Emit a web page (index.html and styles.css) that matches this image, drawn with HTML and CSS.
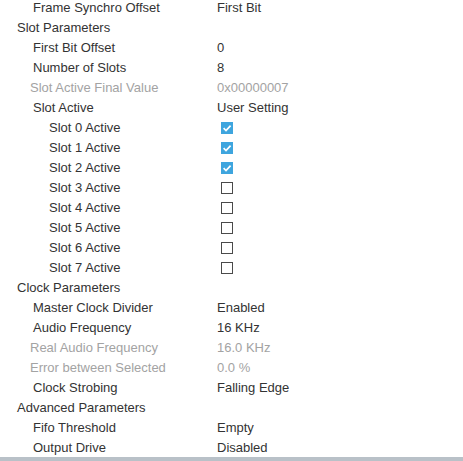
FILE: index.html
```html
<!DOCTYPE html>
<html>
<head>
<meta charset="utf-8">
<link rel="stylesheet" href="styles.css">
</head>
<body>
<div class="tree">
  <div class="row l1"><span class="label">Frame Synchro Offset</span><span class="value">First Bit</span></div>
  <div class="row l0"><span class="label">Slot Parameters</span><span class="value"></span></div>
  <div class="row l1"><span class="label">First Bit Offset</span><span class="value">0</span></div>
  <div class="row l1"><span class="label">Number of Slots</span><span class="value">8</span></div>
  <div class="row l1 dis"><span class="label">Slot Active Final Value</span><span class="value">0x00000007</span></div>
  <div class="row l1"><span class="label">Slot Active</span><span class="value">User Setting</span></div>
  <div class="row l2"><span class="label">Slot 0 Active</span><span class="value"><span class="cb on"><svg viewBox="0 0 12 12" width="12" height="12"><path d="M2.6 6.2 L5 8.5 L9.6 3.6" fill="none" stroke="#fff" stroke-width="1.7"/></svg></span></span></div>
  <div class="row l2"><span class="label">Slot 1 Active</span><span class="value"><span class="cb on"><svg viewBox="0 0 12 12" width="12" height="12"><path d="M2.6 6.2 L5 8.5 L9.6 3.6" fill="none" stroke="#fff" stroke-width="1.7"/></svg></span></span></div>
  <div class="row l2"><span class="label">Slot 2 Active</span><span class="value"><span class="cb on"><svg viewBox="0 0 12 12" width="12" height="12"><path d="M2.6 6.2 L5 8.5 L9.6 3.6" fill="none" stroke="#fff" stroke-width="1.7"/></svg></span></span></div>
  <div class="row l2"><span class="label">Slot 3 Active</span><span class="value"><span class="cb"></span></span></div>
  <div class="row l2"><span class="label">Slot 4 Active</span><span class="value"><span class="cb"></span></span></div>
  <div class="row l2"><span class="label">Slot 5 Active</span><span class="value"><span class="cb"></span></span></div>
  <div class="row l2"><span class="label">Slot 6 Active</span><span class="value"><span class="cb"></span></span></div>
  <div class="row l2"><span class="label">Slot 7 Active</span><span class="value"><span class="cb"></span></span></div>
  <div class="row l0"><span class="label">Clock Parameters</span><span class="value"></span></div>
  <div class="row l1"><span class="label">Master Clock Divider</span><span class="value">Enabled</span></div>
  <div class="row l1"><span class="label">Audio Frequency</span><span class="value">16 KHz</span></div>
  <div class="row l1 dis"><span class="label">Real Audio Frequency</span><span class="value">16.0 KHz</span></div>
  <div class="row l1 dis"><span class="label">Error between Selected</span><span class="value">0.0 %</span></div>
  <div class="row l1"><span class="label">Clock Strobing</span><span class="value">Falling Edge</span></div>
  <div class="row l0"><span class="label">Advanced Parameters</span><span class="value"></span></div>
  <div class="row l1"><span class="label">Fifo Threshold</span><span class="value">Empty</span></div>
  <div class="row l1"><span class="label">Output Drive</span><span class="value">Disabled</span></div>
</div>
<div class="bar"></div>
</body>
</html>
```
FILE: styles.css
```css
html, body {
  margin: 0;
  padding: 0;
  background: #fff;
  overflow: hidden;
}
body {
  width: 463px;
  height: 461px;
  font-family: "Liberation Sans", Arial, sans-serif;
  font-size: 13px;
  color: #333;
}
.tree {
  margin-top: -3px;
}
.row {
  display: grid;
  grid-template-columns: 217px 1fr;
  height: 20px;
  line-height: 21px;
  white-space: nowrap;
}
.label {
  overflow: hidden;
}
.l0 .label { padding-left: 17px; }
.l1 .label { padding-left: 33px; }
.l2 .label { padding-left: 49px; }
.dis .label { padding-left: 30px; }
.dis { color: #a3a3a3; }
.value {
  display: flex;
  align-items: center;
}
.cb {
  box-sizing: border-box;
  width: 12px;
  height: 12px;
  margin-left: 4px;
  margin-top: 1px;
  border: 1.5px solid #4a4a4a;
  background: #fff;
  display: block;
}
.cb.on {
  border: none;
  background: #3ea5de;
}
.cb svg { display: block; }
.bar {
  height: 4px;
  background: #b9c1c8;
}
```
